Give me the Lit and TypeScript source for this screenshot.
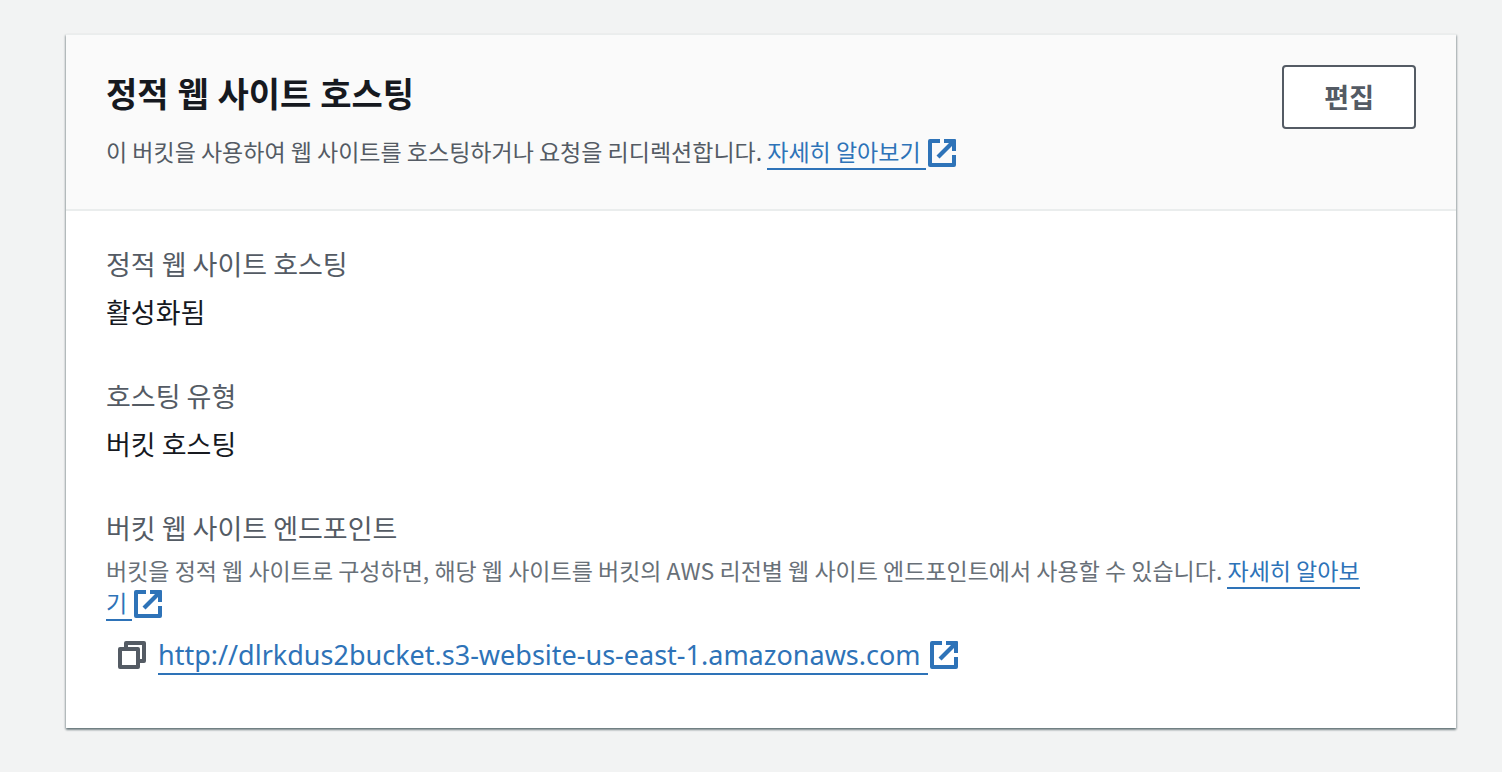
import { LitElement, html, css, svg } from "lit";
import { customElement } from "lit/decorators.js";

const externalIcon = html`<svg class="icon" viewBox="0 0 28 28" aria-hidden="true">
  ${svg`<path d="M12 2H2V26H26V16" fill="none" stroke="currentColor" stroke-width="4" stroke-linejoin="round"/>
  <path d="M16 0H27Q28 0 28 1V12H24V7L11.5 19.5L8.5 16.5L21 4H16Z" fill="currentColor"/>`}
</svg>`;

@customElement("app-root")
export class AppRoot extends LitElement {
  static styles = css`
    :host {
      display: block;
      box-sizing: border-box;
      min-height: 100vh;
      padding: 35px 46px 43px 66px;
      background: #f2f3f3;
      color: #16191f;
      font-family: "Noto Sans CJK KR", sans-serif;
      font-size: 27px;
      line-height: 44px;
    }
    .card {
      background: #fff;
      box-shadow: 0 2px 2px rgba(0, 28, 36, 0.4), 1px 1px 2px rgba(0, 28, 36, 0.2),
        -1px 1px 2px rgba(0, 28, 36, 0.2);
      border-top: 1px solid #eaeded;
      margin-top: -1px;
    }
    .header {
      display: flex;
      justify-content: space-between;
      align-items: flex-start;
      gap: 40px;
      padding: 30px 40px 42px;
      background: #fafafa;
      border-bottom: 2px solid #eaeded;
    }
    h2 {
      margin: 0;
      font-family: "Noto Sans", "Noto Sans CJK KR", sans-serif;
      font-size: 34px;
      line-height: 58px;
      font-weight: 700;
    }
    p {
      margin: 0;
      font-size: 23px;
      line-height: 32px;
    }
    .intro {
      color: #545b64;
      padding-top: 12px;
    }
    .hint {
      color: #687078;
    }
    .edit {
      flex: none;
      box-sizing: border-box;
      height: 64px;
      padding: 0 40px;
      font: inherit;
      font-weight: 700;
      line-height: 56px;
      color: #545b64;
      background: #fff;
      border: 2px solid #545b64;
      border-radius: 4px;
    }
    .body {
      display: flex;
      flex-direction: column;
      gap: 40px;
      margin: 0;
      padding: 31px 44px 51px 40px;
    }
    .field {
      display: flex;
      flex-direction: column;
      gap: 4px;
    }
    dt {
      color: #545b64;
    }
    dd {
      margin: 0;
    }
    a {
      color: #2e73b8;
      text-decoration: none;
    }
    .line {
      border-bottom: 2px solid currentColor;
      white-space: pre-wrap;
    }
    .tail {
      white-space: nowrap;
    }
    .tail .line {
      white-space: pre;
    }
    .icon {
      width: 28px;
      height: 28px;
      margin-left: 2px;
      vertical-align: -6px;
    }
    .endpoint {
      display: flex;
      align-items: center;
      gap: 12px;
      padding: 15px 12px 0;
      font-family: "Noto Sans", "Noto Sans CJK KR", sans-serif;
    }
    .endpoint .icon {
      vertical-align: -4px;
    }
    .copy {
      display: flex;
      padding: 0;
      border: 0;
      background: none;
      color: #545b64;
    }
    .copy svg {
      width: 28px;
      height: 28px;
    }
  `;

  render() {
    return html`<section class="card" aria-labelledby="title">
      <header class="header">
        <div>
          <h2 id="title">정적 웹 사이트 호스팅</h2>
          <p class="intro">이 버킷을 사용하여 웹 사이트를 호스팅하거나 요청을 리디렉션합니다. ${this.learnMore()}</p>
        </div>
        <button class="edit" type="button">편집</button>
      </header>
      <dl class="body">
        <div class="field"><dt>정적 웹 사이트 호스팅</dt><dd>활성화됨</dd></div>
        <div class="field"><dt>호스팅 유형</dt><dd>버킷 호스팅</dd></div>
        <div class="field">
          <dt>버킷 웹 사이트 엔드포인트</dt>
          <dd>
            <p class="hint">버킷을 정적 웹 사이트로 구성하면, 해당 웹 사이트를 버킷의 AWS 리전별 웹 사이트 엔드포인트에서 사용할 수 있습니다. ${this.learnMore()}</p>
            <div class="endpoint">
              <button class="copy" type="button" aria-label="복사">
                <svg viewBox="0 0 28 28" aria-hidden="true" fill="none" stroke="currentColor" stroke-width="4" stroke-linejoin="round">
                  <path d="M2 8H20V26H2Z" />
                  <path d="M8 7V2H26V20H21" />
                </svg>
              </button>
              <a href="http://dlrkdus2bucket.s3-website-us-east-1.amazonaws.com"><span class="tail"><span class="line">http://dlrkdus2bucket.s3-website-us-east-1.amazonaws.com </span>${externalIcon}</span></a>
            </div>
          </dd>
        </div>
      </dl>
    </section>`;
  }

  private learnMore() {
    return html`<a href="#"><span class="line">자세히 알아보</span><span class="tail"><span class="line">기 </span>${externalIcon}</span></a>`;
  }
}
